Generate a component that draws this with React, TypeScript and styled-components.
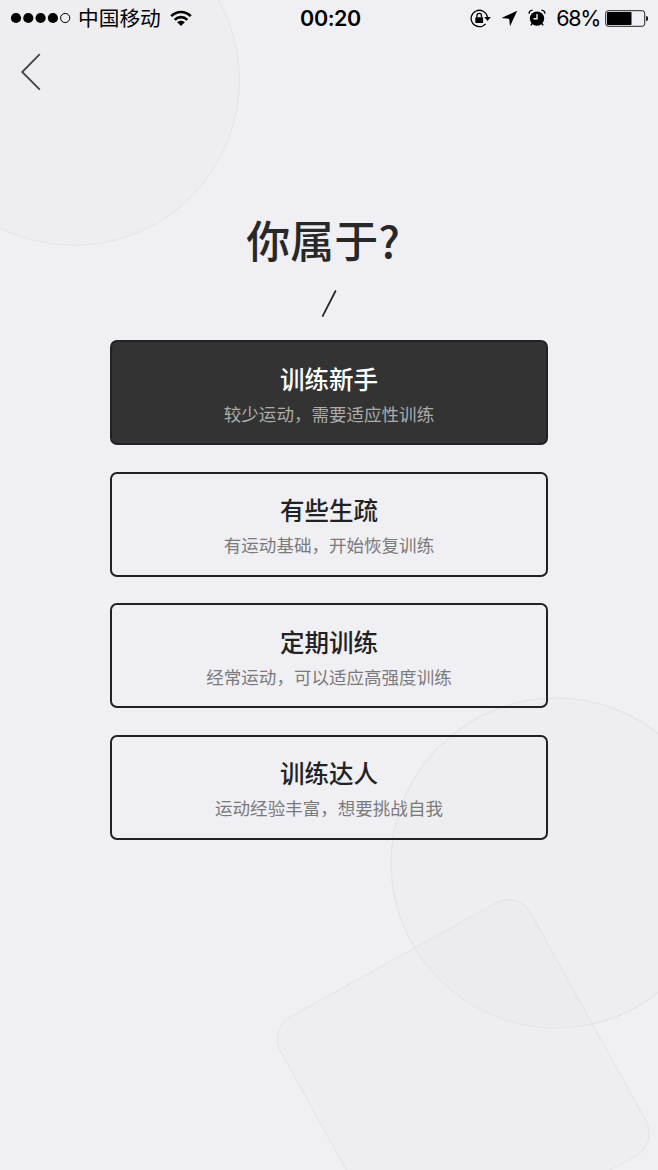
import React from "react";
import styled, { createGlobalStyle } from "styled-components";

const GlobalStyle = createGlobalStyle`
  * { box-sizing: border-box; }
  body { margin: 0; background: #efeff4; }
`;

const Screen = styled.main`
  position: relative;
  width: 658px;
  height: 1170px;
  overflow: hidden;
  background: #efeff4;
  color: #222;
  font-family: Inter, "Noto Sans CJK SC", sans-serif;
`;

const Backdrop = styled.svg`
  position: absolute;
  inset: 0;
  fill: #eeeef0;
  stroke: #e6e6e9;
  stroke-width: 1.2;
`;

const Content = styled.div`
  position: relative;
  display: flex;
  flex-direction: column;
`;

const StatusBar = styled.header`
  display: grid;
  grid-template-columns: 1fr auto 1fr;
  align-items: center;
  height: 36px;
  padding: 0 9px 0 11px;
  color: #000;
`;

const StatusGroup = styled.div<{ $end?: boolean }>`
  display: flex;
  align-items: center;
  height: 36px;
  justify-content: ${(p) => (p.$end ? "flex-end" : "flex-start")};
`;

const Carrier = styled.span`
  margin: 1px 9px -1px 7px;
  font-size: 20.7px;
  line-height: 36px;
`;

const Clock = styled.time`
  margin-left: 1px;
  font-size: 21.5px;
  font-weight: 600;
  line-height: 36px;
  letter-spacing: -0.4px;
`;

const Percent = styled.span`
  margin: 0 5px 0 10px;
  font-size: 21.5px;
  line-height: 36px;
  letter-spacing: -1.3px;
`;

const Icon = styled.svg<{ $gap?: number }>`
  display: block;
  flex: none;
  margin-left: ${(p) => p.$gap ?? 0}px;
`;

const NavBar = styled.nav`
  display: flex;
  height: 72px;
  padding: 16px 19px;
`;

const BackButton = styled.button`
  width: 24px;
  height: 40px;
  padding: 0;
  border: 0;
  background: none;
`;

const Heading = styled.h1`
  margin: 98px 0 0;
  padding-right: 12px;
  height: 66px;
  text-align: center;
  font-family: "Noto Sans CJK SC", sans-serif;
  font-size: 44px;
  font-weight: 500;
  line-height: 66px;
  color: #282828;
`;

const Divider = styled.div`
  display: flex;
  justify-content: center;
  margin-top: 17px;
  height: 30px;
`;

const Options = styled.div`
  display: flex;
  flex-direction: column;
  gap: 26.5px;
  width: 438px;
  margin: 21.4px 0 0 110px;
`;

const Option = styled.button<{ $selected?: boolean }>`
  display: flex;
  flex-direction: column;
  align-items: center;
  height: 105px;
  padding: 19.6px 0 0;
  border: 2px solid #222224;
  border-radius: 7px;
  background: ${(p) => (p.$selected ? "#333" : "transparent")};
  color: ${(p) => (p.$selected ? "#fff" : "#222")};
  font-family: inherit;
`;

const OptionTitle = styled.span`
  font-size: 24.5px;
  font-weight: 500;
  line-height: 36px;
`;

const OptionNote = styled.span<{ $selected?: boolean }>`
  margin-top: 3px;
  font-size: 17.55px;
  line-height: 28px;
  color: ${(p) => (p.$selected ? "#acacac" : "#7a7a7a")};
`;

const levels = [
  { title: "训练新手", note: "较少运动，需要适应性训练" },
  { title: "有些生疏", note: "有运动基础，开始恢复训练" },
  { title: "定期训练", note: "经常运动，可以适应高强度训练" },
  { title: "训练达人", note: "运动经验丰富，想要挑战自我" },
];

const Signal = () => (
  <Icon width="60" height="12" viewBox="0 0 60 12">
    {[5, 17.3, 29.6, 41.9].map((x) => (
      <circle key={x} cx={x} cy="6" r="5.1" />
    ))}
    <circle cx="54.2" cy="6" r="4.6" fill="none" stroke="#000" strokeWidth="1" />
  </Icon>
);

const Wifi = () => (
  <Icon width="22" height="17" viewBox="0 0 22 17">
    <g fill="none" stroke="#000" strokeWidth="2.6">
      <path d="M1.2 6.2C6.8.5 15.2.5 20.8 6.2" />
      <path d="M4.7 9.8C8.3 6.2 13.7 6.2 17.3 9.8" />
    </g>
    <path d="M11 16 7.2 12.3C9.3 10.3 12.7 10.3 14.8 12.3Z" />
  </Icon>
);

const RotationLock = () => (
  <Icon width="21" height="19" viewBox="0 0 21 19">
    <path d="M15.6 14.8A8.2 8.2 0 1 1 17.4 8" fill="none" stroke="#000" strokeWidth="1.3" />
    <path d="M14.2 8H20.8L17.5 12Z" />
    <rect x="5.3" y="8.2" width="7.8" height="5.8" rx=".7" />
    <path d="M6.9 8.5V6.7a2.3 2.3 0 0 1 4.6 0V8.5" fill="none" stroke="#000" strokeWidth="1.3" />
  </Icon>
);

const Location = () => (
  <Icon $gap={10} width="17" height="17" viewBox="0 0 17 17">
    <path d="M16.2.7 9 16.2 8.2 8.8.5 8.1Z" />
  </Icon>
);

const Alarm = () => (
  <Icon $gap={10} width="18" height="18" viewBox="0 0 18 18">
    <circle cx="9" cy="9.6" r="7.2" />
    <path d="M1 4.6C1.1 2.8 2.6 1.3 4.6 1.1M17 4.6C16.9 2.8 15.4 1.3 13.4 1.1M4.2 14.5 2.8 16.4M13.8 14.5 15.2 16.4" fill="none" stroke="#000" strokeWidth="1.4" />
    <path d="M9 5V9.8H5.5" fill="none" stroke="#efeff4" strokeWidth="1.4" />
  </Icon>
);

const Battery = () => (
  <Icon width="44" height="17" viewBox="0 0 44 17">
    <rect x=".7" y=".7" width="39" height="15.6" rx="2.5" fill="none" stroke="#222" strokeWidth="1" />
    <rect x="2" y="2" width="24.5" height="13" rx=".8" />
    <path d="M41.2 5.7C43.7 6.5 43.7 10.5 41.2 11.3Z" />
  </Icon>
);

export default function App() {
  return (
    <Screen>
      <GlobalStyle />
      <Backdrop width="658" height="1170" viewBox="0 0 658 1170">
        <defs>
          <clipPath id="lower-circle">
            <circle cx="556" cy="863" r="165" />
          </clipPath>
        </defs>
        <circle cx="74" cy="80" r="165.3" />
        <circle cx="556" cy="863" r="165" />
        <rect x="320.3" y="941.8" width="286" height="289" rx="25.5" transform="rotate(-29 463.3 1086.3)" />
        <g clipPath="url(#lower-circle)">
          <rect x="320.3" y="941.8" width="286" height="289" rx="25.5" transform="rotate(-29 463.3 1086.3)" fill="#ebebf0" />
        </g>
        <circle cx="556" cy="863" r="165" fill="none" />
      </Backdrop>
      <Content>
        <StatusBar>
          <StatusGroup>
            <Signal />
            <Carrier>中国移动</Carrier>
            <Wifi />
          </StatusGroup>
          <Clock>00:20</Clock>
          <StatusGroup $end>
            <RotationLock />
            <Location />
            <Alarm />
            <Percent>68%</Percent>
            <Battery />
          </StatusGroup>
        </StatusBar>
        <NavBar>
          <BackButton aria-label="返回">
            <Icon width="24" height="40" viewBox="0 0 24 40">
              <path d="M20.8 2.2 3.2 20 20.8 37.6" fill="none" stroke="#444" strokeWidth="1.8" />
            </Icon>
          </BackButton>
        </NavBar>
        <Heading>你属于?</Heading>
        <Divider>
          <Icon width="18" height="30" viewBox="0 0 18 30">
            <path d="M15.8 1.5 2.4 27.7" stroke="#222" strokeWidth="1.7" />
          </Icon>
        </Divider>
        <Options>
          {levels.map((level, i) => (
            <Option key={level.title} $selected={i === 0}>
              <OptionTitle>{level.title}</OptionTitle>
              <OptionNote $selected={i === 0}>{level.note}</OptionNote>
            </Option>
          ))}
        </Options>
      </Content>
    </Screen>
  );
}
